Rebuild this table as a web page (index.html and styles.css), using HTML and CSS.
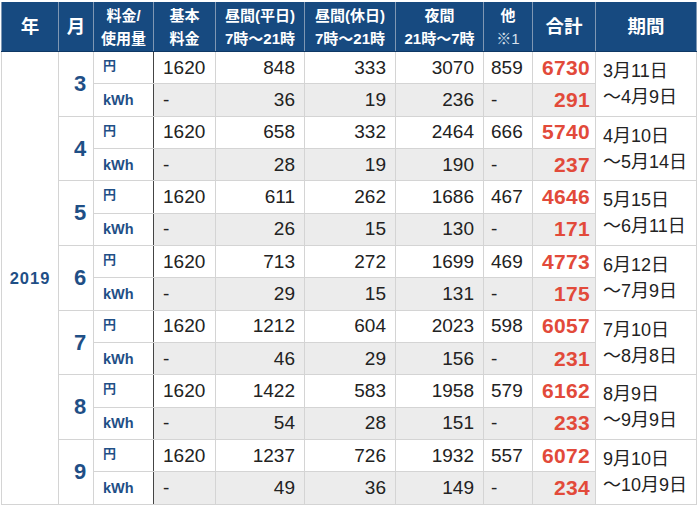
FILE: index.html
```html
<!DOCTYPE html>
<html lang="ja">
<head>
<meta charset="utf-8">
<title>電気料金</title>
<link rel="stylesheet" href="styles.css">
</head>
<body>
<table class="tbl">
<colgroup>
<col class="w-year"><col class="w-mon"><col class="w-lbl"><col class="w-base"><col class="w-day"><col class="w-hol"><col class="w-night"><col class="w-oth"><col class="w-tot"><col class="w-per">
</colgroup>
<thead>
<tr>
<th class="big">年</th>
<th class="big">月</th>
<th>料金/<br>使用量</th>
<th>基本<br>料金</th>
<th>昼間(平日)<br>7時～21時</th>
<th>昼間(休日)<br>7時～21時</th>
<th>夜間<br>21時～7時</th>
<th>他<br><span class="note">※1</span></th>
<th class="big">合計</th>
<th class="big">期間</th>
</tr>
</thead>
<tbody>
<tr><td rowspan="14" class="year">2019</td><td rowspan="2" class="mon">3</td><td class="lbl yen">円</td><td class="base">1620</td><td class="num">848</td><td class="num">333</td><td class="num">3070</td><td class="oth">859</td><td class="tot">6730</td><td rowspan="2" class="per">3月11日<br>～4月9日</td></tr>
<tr class="kwh"><td class="lbl">kWh</td><td class="base">-</td><td class="num">36</td><td class="num">19</td><td class="num">236</td><td class="oth">-</td><td class="tot">291</td></tr>

<tr><td rowspan="2" class="mon">4</td><td class="lbl yen">円</td><td class="base">1620</td><td class="num">658</td><td class="num">332</td><td class="num">2464</td><td class="oth">666</td><td class="tot">5740</td><td rowspan="2" class="per">4月10日<br>～5月14日</td></tr>
<tr class="kwh"><td class="lbl">kWh</td><td class="base">-</td><td class="num">28</td><td class="num">19</td><td class="num">190</td><td class="oth">-</td><td class="tot">237</td></tr>

<tr><td rowspan="2" class="mon">5</td><td class="lbl yen">円</td><td class="base">1620</td><td class="num">611</td><td class="num">262</td><td class="num">1686</td><td class="oth">467</td><td class="tot">4646</td><td rowspan="2" class="per">5月15日<br>～6月11日</td></tr>
<tr class="kwh"><td class="lbl">kWh</td><td class="base">-</td><td class="num">26</td><td class="num">15</td><td class="num">130</td><td class="oth">-</td><td class="tot">171</td></tr>

<tr><td rowspan="2" class="mon">6</td><td class="lbl yen">円</td><td class="base">1620</td><td class="num">713</td><td class="num">272</td><td class="num">1699</td><td class="oth">469</td><td class="tot">4773</td><td rowspan="2" class="per">6月12日<br>～7月9日</td></tr>
<tr class="kwh"><td class="lbl">kWh</td><td class="base">-</td><td class="num">29</td><td class="num">15</td><td class="num">131</td><td class="oth">-</td><td class="tot">175</td></tr>

<tr><td rowspan="2" class="mon">7</td><td class="lbl yen">円</td><td class="base">1620</td><td class="num">1212</td><td class="num">604</td><td class="num">2023</td><td class="oth">598</td><td class="tot">6057</td><td rowspan="2" class="per">7月10日<br>～8月8日</td></tr>
<tr class="kwh"><td class="lbl">kWh</td><td class="base">-</td><td class="num">46</td><td class="num">29</td><td class="num">156</td><td class="oth">-</td><td class="tot">231</td></tr>

<tr><td rowspan="2" class="mon">8</td><td class="lbl yen">円</td><td class="base">1620</td><td class="num">1422</td><td class="num">583</td><td class="num">1958</td><td class="oth">579</td><td class="tot">6162</td><td rowspan="2" class="per">8月9日<br>～9月9日</td></tr>
<tr class="kwh"><td class="lbl">kWh</td><td class="base">-</td><td class="num">54</td><td class="num">28</td><td class="num">151</td><td class="oth">-</td><td class="tot">233</td></tr>

<tr><td rowspan="2" class="mon">9</td><td class="lbl yen">円</td><td class="base">1620</td><td class="num">1237</td><td class="num">726</td><td class="num">1932</td><td class="oth">557</td><td class="tot">6072</td><td rowspan="2" class="per">9月10日<br>～10月9日</td></tr>
<tr class="kwh"><td class="lbl">kWh</td><td class="base">-</td><td class="num">49</td><td class="num">36</td><td class="num">149</td><td class="oth">-</td><td class="tot">234</td></tr>
</tbody>
</table>
</body>
</html>
```

FILE: styles.css
```css
html, body {
  margin: 0;
  padding: 0;
  background: #ffffff;
}
body {
  padding: 2px 0 0 1px;
  font-family: "Liberation Sans", "Noto Sans CJK JP", sans-serif;
  color: #222222;
}
.tbl {
  border-collapse: collapse;
  table-layout: fixed;
  width: 695px;
}
.w-year { width: 57px; }
.w-mon { width: 35px; }
.w-lbl { width: 60px; }
.w-base { width: 62px; }
.w-day { width: 89px; }
.w-hol { width: 91px; }
.w-night { width: 88px; }
.w-oth { width: 49px; }
.w-tot { width: 63px; }
.w-per { width: 101px; }

.tbl th {
  height: 49px;
  padding: 0;
  background: #174a80;
  color: #ffffff;
  font-family: "Liberation Sans", "Noto Sans CJK JP", sans-serif;
  font-weight: bold;
  font-size: 15px;
  line-height: 23px;
  text-align: center;
  vertical-align: middle;
  border-left: 1px solid #7f97b3;
  border-right: 1px solid #7f97b3;
  border-bottom: 1px solid #0f3865;
}
.tbl th.big {
  font-size: 18.5px;
}
.tbl th .note {
  font-weight: normal;
  color: #d6e0ec;
}
.tbl td {
  height: 31.35px;
  padding: 0 9px;
  border: 1px solid #d4d4d4;
  font-size: 19px;
  line-height: 22px;
  vertical-align: middle;
  white-space: nowrap;
}
.tbl td.year {
  text-align: center;
  color: #1f4f86;
  font-weight: bold;
  font-size: 16.5px;
  letter-spacing: 1px;
  padding: 0;
}
.tbl td.mon {
  text-align: center;
  color: #1f4f86;
  font-weight: bold;
  font-size: 22px;
  padding: 0 0 0 8px;
}
.tbl td.lbl {
  color: #1f4f86;
  font-weight: bold;
  font-size: 14.5px;
  text-align: left;
  border-right: 1px solid #444444;
}
.tbl td.yen {
  font-size: 13px;
  line-height: 18px;
  vertical-align: top;
  padding-top: 5px;
  height: 26.35px;
}
.tbl td.base {
  text-align: left;
  border-left: 1px solid #444444;
}
.tbl td.num {
  text-align: right;
}
.tbl td.oth {
  text-align: left;
  padding-left: 7px;
}
.tbl td.tot {
  text-align: right;
  color: #e24a3a;
  font-weight: bold;
  font-size: 21px;
  letter-spacing: 0.3px;
  padding-right: 5px;
}
.tbl td.per {
  font-size: 18px;
  line-height: 26px;
  padding: 0 0 0 7px;
  text-align: left;
}
.tbl tr.kwh td {
  background: #ececec;
}
.tbl tr.kwh td.lbl {
  background: #ffffff;
}
```
